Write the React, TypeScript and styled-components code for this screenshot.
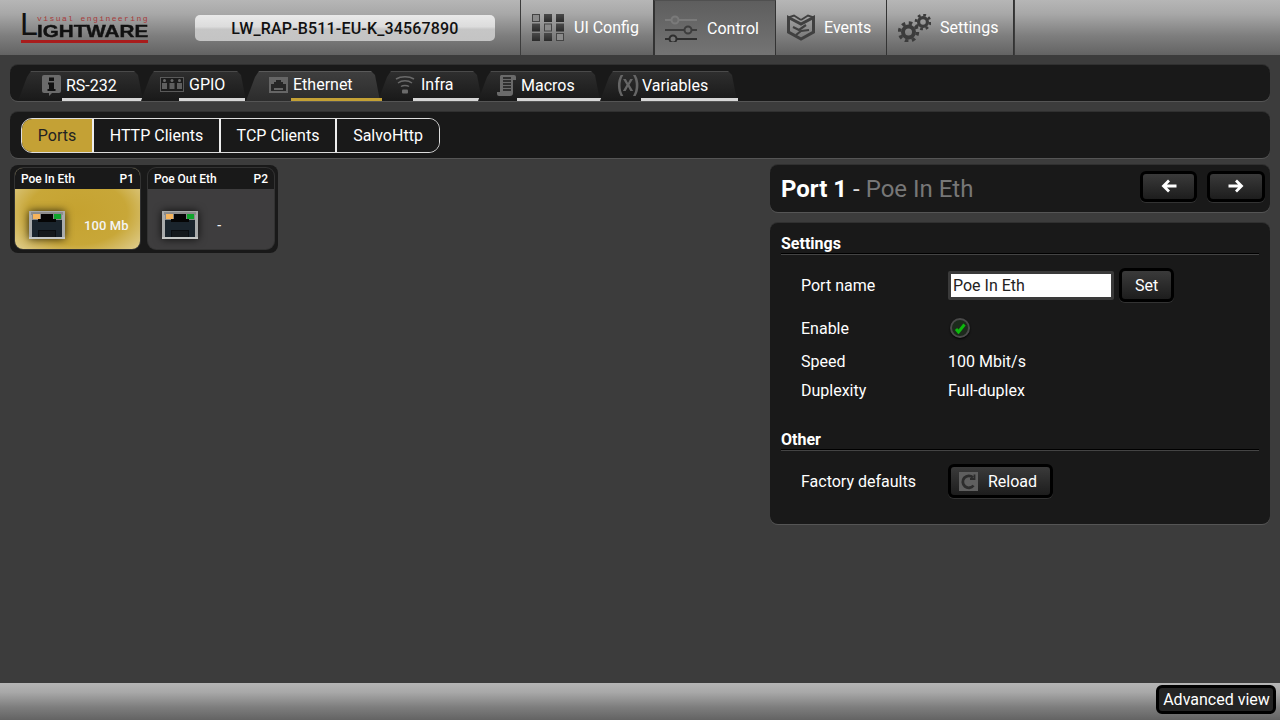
import React from "react";
import styled, { createGlobalStyle } from "styled-components";

const Global = createGlobalStyle`
  html, body { margin: 0; padding: 0; height: 720px; overflow: hidden; background: #3c3c3c; }
  * { box-sizing: border-box; }
  body { font-family: Roboto, "Liberation Sans", sans-serif; font-size: 16px; color: #fff; }
`;

const Page = styled.div`
  width: 1280px; height: 720px; display: flex; flex-direction: column; background: #3c3c3c;
`;

/* Header */
const Header = styled.header`
  height: 55px; flex: none; display: flex; align-items: stretch; padding-left: 21px;
  background: linear-gradient(#b6b6b6 0%, #a8a8a8 25%, #7e7e7e 65%, #636363 100%);
`;
const Logo = styled.div`
  width: 127px; margin-top: 13px; height: 30px; display: flex; flex-direction: column; position: relative;
  font-family: "Liberation Sans", sans-serif; color: #111; border-bottom: 3px solid #a81c1c;
`;
const LogoTagline = styled.div`
  position: absolute; left: 16px; top: 1px; font-size: 8px; line-height: 9px; letter-spacing: 1.42px;
  color: #a83a3a; white-space: nowrap; font-family: "Liberation Mono", monospace;
`;
const LogoMark = styled.div`
  display: flex; align-items: flex-end; height: 23px; line-height: 23px; font-weight: 700; white-space: nowrap;
`;
const LogoBig = styled.span`font-size: 32px; line-height: 23px; height: 23px; font-weight: 400; margin: -1px 0 0 -1px; width: 17px; flex: none;`;
const LogoSmall = styled.span`
  display: inline-block; font-size: 16.5px; line-height: 14px; height: 12px; -webkit-text-stroke: .4px #111;
  transform-origin: left bottom; transform: scaleX(1.25);
`;
const DevicePill = styled.div`
  width: 300px; height: 26px; margin: 15px 0 0 47px; border-radius: 5px; color: #111; font-weight: 500;
  background: linear-gradient(#e9e9e9 0%, #dcdcdc 45%, #c6c6c6 55%, #c4c4c4 100%);
  display: flex; align-items: center; justify-content: center; font-size: 16px; letter-spacing: .17px;
`;
const Nav = styled.nav`
  display: flex; margin-left: 25px; border-right: 1px solid #3c3c3c; border-left: 1px solid #3c3c3c; height: 55px;
`;
const NavTab = styled.div<{ $w: number; $active?: boolean; $gap: number; $pl?: number }>`
  width: ${(p) => p.$w}px; display: flex; align-items: center; padding-left: ${(p) => p.$pl ?? 10}px; gap: ${(p) => p.$gap}px;
  border-left: 1px solid ${(p) => (p.$active ? "#333" : "transparent")};
  border-right: 1px solid #333;
  ${(p) => (p.$active ? "background: linear-gradient(#5e5e5e, #747474); border-top: 1px solid #505050;" : "")}
  &:first-child { border-left: 0; }
`;

/* Main */
const Main = styled.main`
  flex: 1; min-height: 0; padding: 10px 10px 0; display: flex; flex-direction: column;
`;
const Panel = styled.div`
  background: #191919; border-radius: 8px; box-shadow: 0 1px 0 #555, 0 -1px 0 #303030;
`;
const TabBar = styled(Panel)`
  height: 36px; padding: 6px 0 0 8px; display: flex;
`;
const Tab = styled.div<{ $w: number; $ix: number; $gap: number; $on?: boolean; $bl: number; $br: number; $up?: boolean }>`
  position: relative; width: ${(p) => p.$w}px; height: 30px; display: flex; align-items: center;
  padding: 0 0 ${(p) => (p.$up ? 3 : 1)}px ${(p) => p.$ix}px; gap: ${(p) => p.$gap}px; z-index: ${(p) => (p.$on ? 2 : 1)};
  &::before {
    content: ""; position: absolute; top: 0; bottom: 0; z-index: -1;
    left: ${(p) => p.$bl}px; right: ${(p) => p.$br}px;
    clip-path: polygon(0 100%, 9px 6px, 13px 0, calc(100% - 9px) 0, calc(100% - 5px) 4px, 100% 100%);
    background: ${(p) =>
      p.$on
        ? "linear-gradient(#5a5a5a 0, #5a5a5a 1px, #3e3e3e 1px, #2c2c2c 100%)"
        : "linear-gradient(#4a4a4a 0, #4a4a4a 1px, #2e2e2e 1px, #191919 100%)"};
  }
`;
const TabLine = styled.span<{ $x: number; $on?: boolean }>`
  position: absolute; left: ${(p) => p.$x}px; right: 0; bottom: 0; height: 3px;
  background: ${(p) => (p.$on ? "#c4a135" : "#d6d6d6")};
`;
const TabLabel = styled.span`font-size: 16px; line-height: 20px; white-space: nowrap;`;
const VarIcon = styled.span`
  width: 21px; margin-top: -3px; font-family: "Liberation Sans", sans-serif; font-size: 19px; font-weight: 700; color: #666; white-space: nowrap;
  letter-spacing: -.5px; transform: scaleY(1.15);
`;
const SubBar = styled(Panel)`
  height: 46px; margin-top: 11px; padding: 6px 11px; display: flex;
`;
const Segments = styled.div`
  display: flex; height: 35px; border: 1px solid #ddd; border-radius: 11px; overflow: hidden;
`;
const Segment = styled.div<{ $w: number; $on?: boolean }>`
  width: ${(p) => p.$w}px; display: flex; align-items: center; justify-content: center; font-size: 16px;
  background: ${(p) => (p.$on ? "#c4a135" : "#191919")}; color: ${(p) => (p.$on ? "#222" : "#fff")};
  border-right: 2px solid #eee;
  &:last-child { border-right: 0; }
`;
const Content = styled.div`
  flex: 1; margin-top: 7px; display: flex; justify-content: space-between; align-items: flex-start;
`;
const PortPanel = styled(Panel)`
  width: 268px; height: 88px; padding: 3px 4px 0 5px; display: flex; gap: 8px; box-shadow: none;
`;
const PortCard = styled.div<{ $w: number; $on?: boolean }>`
  width: ${(p) => p.$w}px; height: 81px; border-radius: 8px; overflow: hidden; display: flex; flex-direction: column;
  box-shadow: 0 0 0 1px #333;
  background: ${(p) =>
    p.$on ? "radial-gradient(ellipse 72% 72% at 50% 55%, #c5a230 0%, #c8a738 55%, #e4d59f 100%)" : "#3e3d3e"};
`;
const PortHead = styled.div`
  height: 21px; flex: none; background: #191919; display: flex; justify-content: space-between; align-items: center;
  padding: 0 6px; font-size: 12px; font-weight: 500; letter-spacing: -.05px;
`;
const PortBody = styled.div`
  flex: 1; display: flex; align-items: center; padding: 12px 0 0 14px; font-size: 13px; font-weight: 500;
`;
const PortSpeed = styled.span`margin-left: 19px; color: #f4f4f4; letter-spacing: .1px;`;
const RjSvg = styled.svg`flex: none; overflow: visible; filter: drop-shadow(0 0 4px rgba(0,0,0,.8));`;

const Side = styled.div`width: 500px; display: flex; flex-direction: column; gap: 11px;`;
const TitlePanel = styled(Panel)`
  height: 47px; display: flex; align-items: center; justify-content: space-between; padding: 0 5px 0 11px;
`;
const Title = styled.div`font-size: 24px; font-weight: 400; color: #ddd; white-space: pre;`;
const TitleStrong = styled.span`font-weight: 700; color: #fff;`;
const TitleDim = styled.span`color: #777;`;
const Arrows = styled.div`display: flex; gap: 10px; margin-top: -5px;`;
const Btn = styled.div<{ $w: number; $h?: number; $start?: boolean }>`
  width: ${(p) => p.$w}px; height: ${(p) => p.$h ?? 34}px; border: 3px solid #000; border-radius: 6px; flex: none;
  background: linear-gradient(#3a3a3a, #1d1d1d); display: flex; align-items: center;
  justify-content: ${(p) => (p.$start ? "flex-start" : "center")}; padding-left: ${(p) => (p.$start ? 8 : 0)}px;
  font-size: 16px; box-shadow: 0 1px 0 #333;
`;
const FormPanel = styled(Panel)`height: 301px; padding: 10px 11px 0;`;
const SectionHead = styled.div<{ $mt?: number }>`
  height: 21px; padding-top: 1px; margin-top: ${(p) => p.$mt ?? 0}px; font-weight: 700; font-size: 16px; line-height: 20px;
  border-bottom: 1px solid #000; box-shadow: 0 1px 0 #444;
`;
const Row = styled.div<{ $h: number; $mt: number }>`
  height: ${(p) => p.$h}px; margin-top: ${(p) => p.$mt}px; padding-left: 20px; display: flex; align-items: center;
`;
const Label = styled.div`width: 147px; flex: none;`;
const NameInput = styled.div`
  width: 166px; height: 29px; border: 3px solid #3a3a3a; border-radius: 2px; background: #fff; color: #222;
  display: flex; align-items: center; padding-left: 2px; margin-right: 5px;
`;
const EnableDot = styled.div`
  width: 20px; height: 20px; margin-left: 2px; border-radius: 50%; background: #1c2a1c; display: flex; align-items: center; justify-content: center;
  border: 2px solid #4a4a4a; box-shadow: 0 1px 2px #000;
`;
const ReloadIcon = styled.div`
  width: 19px; height: 19px; background: #5f5f5f; display: flex; align-items: center; justify-content: center; margin-right: 10px; flex: none;
`;
const Footer = styled.footer`
  height: 37px; flex: none; display: flex; justify-content: flex-end; padding: 2px 4px 0 0;
  background: linear-gradient(#b6b6b6 0%, #a8a8a8 25%, #7e7e7e 65%, #636363 100%);
`;
const AdvBtn = styled.div`
  width: 120px; height: 29px; border: 3px solid #000; border-radius: 6px; background: #242424; display: flex;
  align-items: center; justify-content: center; font-size: 16px; white-space: nowrap; padding-left: 1px;
`;

const UiConfigIcon = () => {
  const outline = [0, 4, 8];
  return (
    <svg width="32" height="27" viewBox="0 0 32 27" style={{ flex: "none" }}>
      <defs>
        <linearGradient id="ug" x1="0" y1="0" x2="0" y2="1">
          <stop offset="0" stopColor="#4a4a4a" />
          <stop offset="1" stopColor="#2a2a2a" />
        </linearGradient>
      </defs>
      {Array.from({ length: 9 }).map((_, i) => {
        const x = (i % 3) * 12;
        const y = Math.floor(i / 3) * 9.5;
        return outline.includes(i) ? (
          <rect key={i} x={x + 0.5} y={y + 0.5} width="7" height="7" fill="#8a8a8a" stroke="#444" />
        ) : (
          <rect key={i} x={x} y={y} width="8" height="8" fill="url(#ug)" />
        );
      })}
    </svg>
  );
};
const ControlIcon = () => (
  <svg width="33" height="27" viewBox="0 0 33 27" style={{ flex: "none" }}>
    <g fill="none" strokeWidth="2">
      <path d="M0 5h32" stroke="#7a7a7a" />
      <circle cx="10" cy="5" r="3.5" stroke="#7a7a7a" fill="#6a6a6a" />
      <path d="M0 15h32" stroke="#3d3d3d" />
      <circle cx="23" cy="15" r="3.5" stroke="#3d3d3d" fill="#6f6f6f" />
      <path d="M0 24h32" stroke="#2e2e2e" />
      <circle cx="8" cy="24" r="3.5" stroke="#2e2e2e" fill="#747474" />
    </g>
  </svg>
);
const EventsIcon = () => (
  <svg width="28" height="27" viewBox="0 0 28 27" style={{ flex: "none" }} fill="none" stroke="#404040" strokeWidth="3">
    <path d="M1.5 3.5 L14 10 L26.5 3.5 V18 L14 25 L1.5 18 Z" />
    <path d="M1.5 3.5 L7 1.5 L14 6" strokeWidth="2" />
    <path d="M26.5 3.5 L21 1.5 L14 6" strokeWidth="2" />
    <path d="M6 13 L12 16 L19 11" strokeWidth="2.2" />
    <path d="M9 21 L14 17 L22 16" strokeWidth="2.2" />
  </svg>
);
const Gear = ({ r, cx, cy }: { r: number; cx: number; cy: number }) => {
  const c = 2 * Math.PI * (r - 1);
  return (
    <g fill="none" stroke="#3c3c3c">
      <circle cx={cx} cy={cy} r={r * 0.55} strokeWidth={r * 0.4} />
      <circle cx={cx} cy={cy} r={r - 1} strokeWidth={r * 0.34} strokeDasharray={`${c / 16} ${c / 16}`} />
    </g>
  );
};
const GearsIcon = () => (
  <svg width="33" height="28" viewBox="0 0 33 28" style={{ flex: "none" }}>
    <Gear r={10} cx={10.5} cy={18} />
    <Gear r={8} cx={25} cy={8} />
  </svg>
);
const Info = () => (
  <svg width="19" height="21" viewBox="0 0 19 21" style={{ flex: "none" }}>
    <path d="M2 0h15a2 2 0 0 1 2 2v14a2 2 0 0 1-2 2h-7l-3 3v-3H2a2 2 0 0 1-2-2V2a2 2 0 0 1 2-2z" fill="#6b6b6b" />
    <rect x="7" y="2.5" width="5" height="3.5" fill="#111" />
    <path d="M6 7.5h6V14h1.5v2h-8v-2H7V9.5H6z" fill="#111" />
  </svg>
);
const Gpio = () => (
  <svg width="24" height="15" viewBox="0 0 24 15" style={{ flex: "none" }}>
    <rect x=".5" y=".5" width="23" height="14" fill="#1c1c1c" stroke="#5a5a5a" />
    {[2, 9.5, 17].map((x) => (
      <g key={x}>
        <rect x={x} y="6" width="5" height="6" fill="#5f5f5f" />
        <circle cx={x + 2.5} cy="3.5" r="1.5" fill="#6a6a6a" />
      </g>
    ))}
  </svg>
);
const EthIcon = () => (
  <svg width="19" height="16" viewBox="0 0 19 16" style={{ flex: "none" }}>
    <rect width="19" height="16" fill="#666" />
    <path d="M2 14V7h3V5h2V3h5v2h2v2h3v7z" fill="#262626" />
    <path d="M5 13h9v-2H5z" fill="#666" />
  </svg>
);
const Wifi = () => (
  <svg width="20" height="18" viewBox="0 0 20 18" style={{ flex: "none" }} fill="none" stroke="#6a6a6a" strokeWidth="1.5">
    <path d="M1 3C6 0 14 0 19 3" />
    <path d="M3 7C7 4 13 4 17 7" />
    <path d="M6 10.5C8 9 12 9 14 10.5" />
    <rect x="7" y="13.5" width="6" height="4" fill="#6a6a6a" stroke="none" rx="1" />
  </svg>
);
const Scroll = () => (
  <svg width="19" height="21" viewBox="0 0 19 21" style={{ flex: "none" }}>
    <path d="M4 0h13a2 2 0 0 1 2 2v3h-3v13a3 3 0 0 1-3 3H2a2 2 0 0 1-2-2v-2h3V2a2 2 0 0 1 1-2z" fill="#6a6a6a" />
    <path d="M6 3h8M6 6h8M6 9h8M6 12h8M6 15h8" stroke="#1c1c1c" strokeWidth="1.3" />
  </svg>
);
const Rj = () => (
  <RjSvg width="36" height="28" viewBox="0 0 36 28">
    <rect width="36" height="28" fill="#a9abab" />
    <rect x="2" y="1" width="32" height="3" fill="#8c8c8c" />
    <rect x="3" y="3" width="30" height="23" fill="#1a242c" />
    <rect x="3" y="2" width="9" height="7" fill="#8a8a8a" />
    <rect x="24" y="2" width="9" height="7" fill="#8a8a8a" />
    <rect x="4" y="3" width="7" height="5" fill="#f6b45c" />
    <rect x="25" y="3" width="7" height="5" fill="#0fa52c" />
    <path d="M12 3h12v5h3v3H9V8h3z" fill="#050505" />
    <path d="M9 19h18v7H9z" fill="#0a0d10" />
    <path d="M11 20v6M13 20v6M15 20v6M17 20v6M19 20v6M21 20v6M23 20v6M25 20v6" stroke="#2a2e30" strokeWidth=".7" />
    <rect y="26" width="36" height="2" fill="#c5c7c5" />
  </RjSvg>
);

const tabs = [
  { n: "RS-232", w: 128, ix: 24, g: 5, line: 44, bl: 0, br: 3, icon: <Info /> },
  { n: "GPIO", w: 99, ix: 14, g: 5, line: 33, bl: -5, br: -1, icon: <Gpio />, up: true },
  { n: "Ethernet", w: 137, ix: 24, g: 5, line: 46, bl: 1, br: 2, icon: <EthIcon />, on: true, up: true },
  { n: "Infra", w: 101, ix: 13, g: 6, line: 31, bl: -4, br: 1, icon: <Wifi />, up: true },
  { n: "Macros", w: 121, ix: 14, g: 5, line: 34, bl: -5, br: 4, icon: <Scroll /> },
  { n: "Variables", w: 134, ix: 13, g: 4, line: 37, bl: -4, br: 1, icon: <VarIcon>(x)</VarIcon> },
];

export default function App() {
  return (
    <Page>
      <Global />
      <Header>
        <Logo>
          <LogoTagline>visual engineering</LogoTagline>
          <LogoMark>
            <LogoBig>L</LogoBig>
            <LogoSmall>IGHTWARE</LogoSmall>
          </LogoMark>
        </Logo>
        <DevicePill>LW_RAP-B511-EU-K_34567890</DevicePill>
        <Nav>
          <NavTab $w={133} $gap={10} $pl={11}><UiConfigIcon />UI Config</NavTab>
          <NavTab $w={122} $gap={9} $active><ControlIcon />Control</NavTab>
          <NavTab $w={111} $gap={9}><EventsIcon />Events</NavTab>
          <NavTab $w={127} $gap={9}><GearsIcon />Settings</NavTab>
        </Nav>
      </Header>
      <Main>
        <TabBar>
          {tabs.map((t) => (
            <Tab key={t.n} $w={t.w} $ix={t.ix} $gap={t.g} $on={t.on} $bl={t.bl} $br={t.br} $up={t.up}>
              {t.icon}
              <TabLabel>{t.n}</TabLabel>
              <TabLine $x={t.line} $on={t.on} />
            </Tab>
          ))}
        </TabBar>
        <SubBar>
          <Segments>
            <Segment $w={72} $on>Ports</Segment>
            <Segment $w={127}>HTTP Clients</Segment>
            <Segment $w={116}>TCP Clients</Segment>
            <Segment $w={102}>SalvoHttp</Segment>
          </Segments>
        </SubBar>
        <Content>
          <PortPanel>
            <PortCard $w={125} $on>
              <PortHead><span>Poe In Eth</span><span>P1</span></PortHead>
              <PortBody><Rj /><PortSpeed>100 Mb</PortSpeed></PortBody>
            </PortCard>
            <PortCard $w={126}>
              <PortHead><span>Poe Out Eth</span><span>P2</span></PortHead>
              <PortBody><Rj /><PortSpeed>-</PortSpeed></PortBody>
            </PortCard>
          </PortPanel>
          <Side>
            <TitlePanel>
              <Title><TitleStrong>Port 1</TitleStrong> - <TitleDim>Poe In Eth</TitleDim></Title>
              <Arrows>
                <Btn $w={57} $h={31}>
                  <svg width="16" height="14" viewBox="0 0 16 14" fill="none" stroke="#fff" strokeWidth="2.8"><path d="M15.5 7H2.5M8 1.5L2.5 7 8 12.5" /></svg>
                </Btn>
                <Btn $w={58} $h={31}>
                  <svg width="16" height="14" viewBox="0 0 16 14" fill="none" stroke="#fff" strokeWidth="2.8"><path d="M.5 7h13M8 1.5L13.5 7 8 12.5" /></svg>
                </Btn>
              </Arrows>
            </TitlePanel>
            <FormPanel>
              <SectionHead>Settings</SectionHead>
              <Row $h={34} $mt={14}>
                <Label>Port name</Label>
                <NameInput>Poe In Eth</NameInput>
                <Btn $w={55}>Set</Btn>
              </Row>
              <Row $h={30} $mt={11}>
                <Label>Enable</Label>
                <EnableDot>
                  <svg width="12" height="11" viewBox="0 0 12 11" fill="none" stroke="#0cb80c" strokeWidth="3"><path d="M2 6l2.5 3L10.5 1.5" /></svg>
                </EnableDot>
              </Row>
              <Row $h={30} $mt={3}><Label>Speed</Label>100 Mbit/s</Row>
              <Row $h={28} $mt={0}><Label>Duplexity</Label>Full-duplex</Row>
              <SectionHead $mt={25}>Other</SectionHead>
              <Row $h={34} $mt={14}>
                <Label>Factory defaults</Label>
                <Btn $w={105} $start>
                  <ReloadIcon>
                    <svg width="17" height="17" viewBox="0 0 17 17" fill="none" stroke="#2c2c2c" strokeWidth="2.8"><path d="M13.5 12.5A6 6 0 1 1 13 4.5" /><path d="M14.5 1.5v4.5H10" strokeWidth="1.8" /></svg>
                  </ReloadIcon>
                  Reload
                </Btn>
              </Row>
            </FormPanel>
          </Side>
        </Content>
      </Main>
      <Footer>
        <AdvBtn>Advanced view</AdvBtn>
      </Footer>
    </Page>
  );
}
